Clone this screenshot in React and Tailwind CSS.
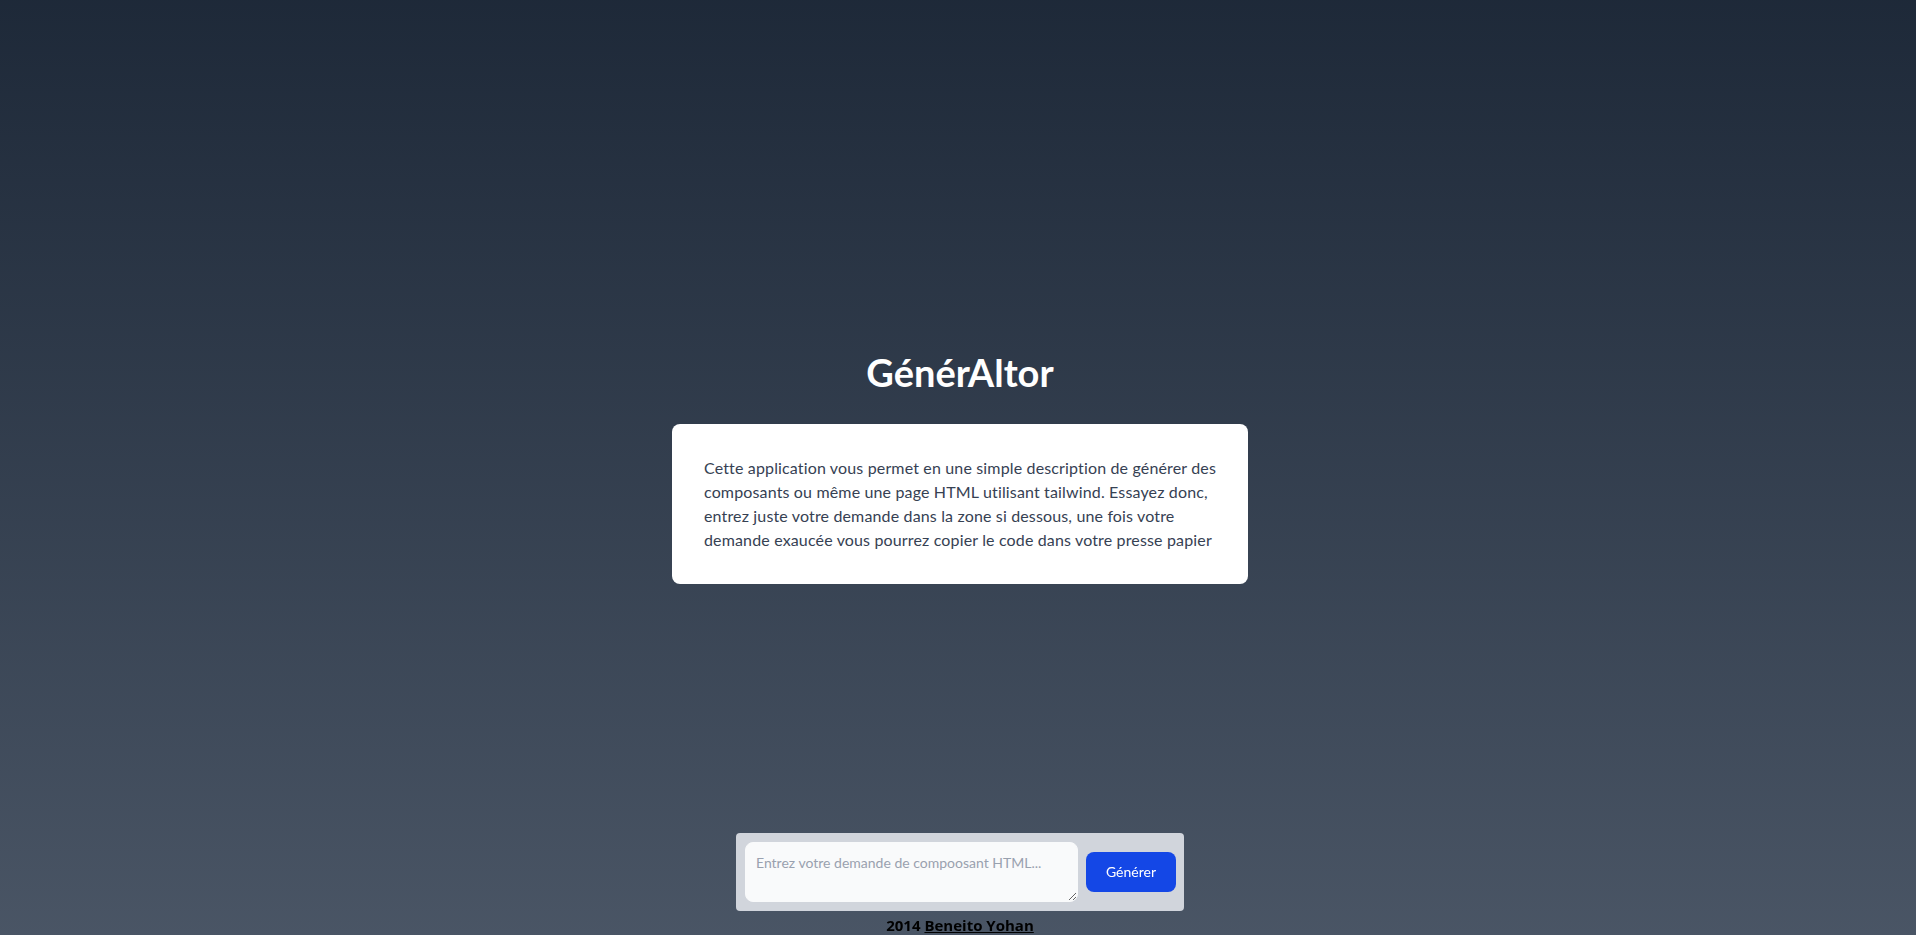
import React from 'react'

const App = () => {
  return (
    <div className="relative h-screen w-full overflow-hidden bg-linear-to-b from-gray-800 to-gray-600 pl-1 font-['Lato','Open_Sans',sans-serif]">
      {/* Main content */}
      <div className="flex h-full flex-col items-center justify-center">
        <h1 className="mb-8 text-[38px] font-bold leading-10 text-white">GénérAltor</h1>
        <div className="w-full max-w-xl rounded-lg bg-white p-8">
          <p className="text-base leading-6 tracking-[0.15px] text-gray-700">
            Cette application vous permet en une simple description de générer des composants ou même une page HTML utilisant tailwind. Essayez donc, entrez juste votre demande dans la zone si dessous, une fois votre demande exaucée vous pourrez copier le code dans votre presse papier
          </p>
        </div>
      </div>

      {/* Composer */}
      <div className="fixed inset-x-0 bottom-0 flex flex-col items-center pl-1">
        <div className="flex w-full max-w-md items-center gap-2 rounded bg-gray-300 py-[9px] pl-[9px] pr-2">
          <textarea
            className="h-[60px] flex-1 rounded-lg border border-gray-50 bg-gray-50 p-2.5 text-sm leading-5 text-gray-900 placeholder-gray-400 outline-none"
            placeholder="Entrez votre demande de compoosant HTML..."
          />
          <button className="rounded-lg bg-blue-700 px-5 py-2.5 text-sm leading-5 text-white">Générer</button>
        </div>
        <p className="mt-1 font-['Open_Sans',sans-serif] text-[15px] font-bold leading-5 text-black">
          2014 <a href="#" className="underline">Beneito Yohan</a>
        </p>
      </div>
    </div>
  )
}

export default App
